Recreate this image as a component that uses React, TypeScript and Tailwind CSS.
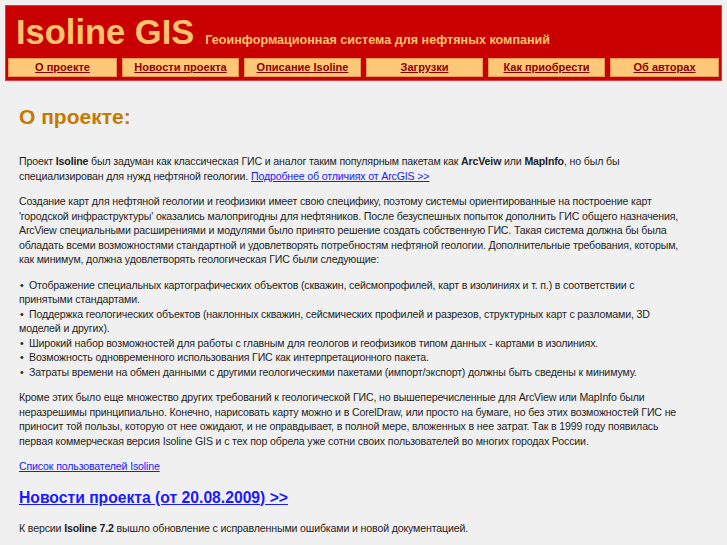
import React from "react";

const navItems = ["О проекте", "Новости проекта", "Описание Isoline", "Загрузки", "Как приобрести", "Об авторах"];

const listItems: React.ReactNode[] = [
  <>Отображение специальных картографических объектов (скважин, сейсмопрофилей, карт в изолиниях и т. п.) в соответствии с<br />принятыми стандартами.</>,
  <>Поддержка геологических объектов (наклонных скважин, сейсмических профилей и разрезов, структурных карт с разломами, 3D<br />моделей и других).</>,
  <>Широкий набор возможностей для работы с главным для геологов и геофизиков типом данных - картами в изолиниях.</>,
  <>Возможность одновременного использования ГИС как интерпретационного пакета.</>,
  <>Затраты времени на обмен данными с другими геологическими пакетами (импорт/экспорт) должны быть сведены к минимуму.</>,
];

export default function App() {
  return (
    <div className="min-h-[545px] bg-[#f0f0f0] text-[#1e1e1e]" style={{ fontFamily: '"Liberation Sans", Arial, sans-serif' }}>
      <div className="px-[5px] pt-[5px]">
        <div className="bg-[#c80000] border border-[#d84040] px-[2px] pb-[2px]">
          <div className="flex items-baseline pl-[8px] h-[52px] pt-[5px]">
            <span className="text-[34.5px] leading-[42px] font-bold text-[#ffc36e]">Isoline GIS</span>
            <span className="ml-[11px] text-[12.6px] font-bold text-[#ffc36e]">Геоинформационная система для нефтяных компаний</span>
          </div>
          <div className="grid grid-cols-[109px_117px_117px_117px_117px_109px] gap-[5px] pb-[1px]">
            {navItems.map((t) => (
              <div key={t} className="h-[19px] bg-[#ffc878] border border-[#e89a50] flex items-center justify-center">
                <span className="text-[11px] font-bold text-[#8c0000] underline">{t}</span>
              </div>
            ))}
          </div>
        </div>
      </div>
      <div className="pl-[19px] pr-[2px] text-[10.6px] tracking-[-0.15px] leading-[14.5px]">
        <h1 className="mt-[24px] text-[21px] tracking-normal font-bold text-[#c87800] leading-[24px]">О проекте:</h1>
        <p className="mt-[25px]">
          Проект <b>Isoline</b> был задуман как классическая ГИС и аналог таким популярным пакетам как <b>ArcVeiw</b> или <b>MapInfo</b>, но был бы<br />
          специализирован для нужд нефтяной геологии. <a className="text-[#1a1aff] underline">Подробнее об отличиях от ArcGIS &gt;&gt;</a>
        </p>
        <p className="mt-[11px]">
          Создание карт для нефтяной геологии и геофизики имеет свою специфику, поэтому системы ориентированные на построение карт<br />
          'городской инфраструктуры' оказались малопригодны для нефтяников. После безуспешных попыток дополнить ГИС общего назначения,<br />
          ArcView специальными расширениями и модулями было принято решение создать собственную ГИС. Такая система должна бы была<br />
          обладать всеми возможностями стандартной и удовлетворять потребностям нефтяной геологии. Дополнительные требования, которым,<br />
          как минимум, должна удовлетворять геологическая ГИС были следующие:
        </p>
        <ul className="mt-[11px]">
          {listItems.map((t, i) => (
            <li key={i}>
              <span className="inline-block w-[10px] pl-[1px]">•</span>
              {t}
            </li>
          ))}
        </ul>
        <p className="mt-[11px]">
          Кроме этих было еще множество других требований к геологической ГИС, но вышеперечисленные для ArcView или MapInfo были<br />
          неразрешимы принципиально. Конечно, нарисовать карту можно и в CorelDraw, или просто на бумаге, но без этих возможностей ГИС не<br />
          приносит той пользы, которую от нее ожидают, и не оправдывает, в полной мере, вложенных в нее затрат. Так в 1999 году появилась<br />
          первая коммерческая версия Isoline GIS и с тех пор обрела уже сотни своих пользователей во многих городах России.
        </p>
        <p className="mt-[11px]">
          <a className="text-[#1a1aff] underline">Список пользователей Isoline</a>
        </p>
        <h2 className="mt-[15px] text-[15.7px] tracking-normal font-bold leading-[18px]">
          <a className="text-[#1a1aff] underline">Новости проекта (от 20.08.2009) &gt;&gt;</a>
        </h2>
        <p className="mt-[14px]">
          К версии <b>Isoline 7.2</b> вышло обновление с исправленными ошибками и новой документацией.
        </p>
      </div>
    </div>
  );
}
